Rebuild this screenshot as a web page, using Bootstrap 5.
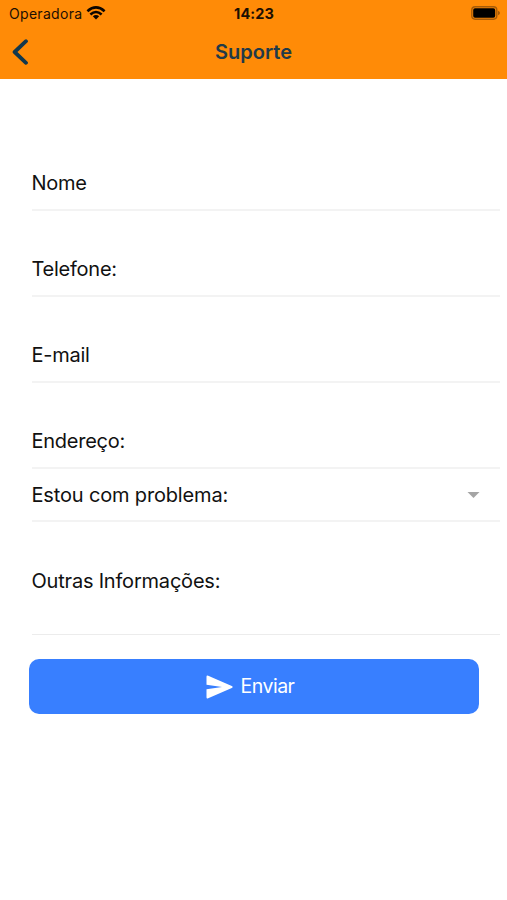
<!DOCTYPE html>
<html lang="pt-BR">
<head>
<meta charset="utf-8">
<meta name="viewport" content="width=device-width, initial-scale=1">
<title>Suporte</title>
<link href="https://cdn.jsdelivr.net/npm/bootstrap@5.3.0/dist/css/bootstrap.min.css" rel="stylesheet">
<style>
  body { font-family: Inter, "Liberation Sans", sans-serif; color: #111; overflow: hidden; }
  .app-header { background: #ff8b07; height: 79px; }
  .status-bar { height: 26px; padding: 0 7px 0 9px; color: #1c0f02; font-size: 14px; line-height: 27px; }
  .carrier { letter-spacing: .3px; }
  .clock { font-size: 14.5px; letter-spacing: .1px; margin-left: -1px; }
  .title-bar { height: 52px; padding: 0 12px; color: #213a49; }
  .title-bar h1 { font-size: 20px; line-height: 52px; letter-spacing: 0; }
  .side { flex: 1 1 0; }
  .support-form { padding: 46px 7px 0 32px; }
  .field { height: 86px; padding-top: 46px; border-bottom: 2px solid #f3f3f3; font-size: 20px; line-height: 24px; letter-spacing: -.25px; text-indent: -.5px; }
  .field-select { height: 53px; padding: 14px 20px 0 0; letter-spacing: -.16px; }
  .field-notes { height: 113px; padding-top: 47px; border-bottom-width: 1px; border-color: #ececec; letter-spacing: -.2px; }
  .send { height: 55px; margin: 24px 21px 0 -3px; padding-right: 8px; background: #387fff; border-radius: 10px; font-size: 19.5px; letter-spacing: -.5px; }
  .send span { padding-top: 1px; }
</style>
</head>
<body class="bg-white">
<header class="app-header">
  <div class="status-bar d-flex align-items-center">
    <div class="side d-flex align-items-center">
      <span class="carrier">Operadora</span>
      <svg class="ms-1" width="20" height="14" viewBox="0 0 20 14" fill="none" stroke="#0c0600" stroke-width="2.6">
        <path d="M1.4 5.2Q10-2.4 18.6 5.2M4.4 8.5Q10 3.5 15.6 8.5"/>
        <path d="M6.8 10.3Q10 7.6 13.2 10.3L10 13.6Z" fill="#0c0600" stroke="none"/>
      </svg>
    </div>
    <span class="clock fw-bold">14:23</span>
    <div class="side d-flex justify-content-end">
      <svg width="29" height="14" viewBox="0 0 29 14">
        <rect x=".8" y=".8" width="25" height="12.4" rx="3.4" fill="none" stroke="#a65b08" stroke-width="1.4"/>
        <rect x="2.2" y="2.2" width="22" height="9.6" rx="1.8" fill="#000"/>
        <path d="M27 4.8Q29 5.5 29 7T27 9.2Z" fill="#a65b08"/>
      </svg>
    </div>
  </div>
  <div class="title-bar d-flex align-items-center">
    <div class="side d-flex">
      <svg width="17" height="26" viewBox="0 0 17 26" fill="none" stroke="#12384d" stroke-width="3.8" stroke-linecap="round" stroke-linejoin="round"><path d="M14 2.2 2.6 13 14 23.8"/></svg>
    </div>
    <h1 class="m-0 fw-semibold">Suporte</h1>
    <div class="side"></div>
  </div>
</header>
<main class="support-form">
  <div class="field">Nome</div>
  <div class="field">Telefone:</div>
  <div class="field">E-mail</div>
  <div class="field">Endereço:</div>
  <div class="field field-select d-flex justify-content-between align-items-start">
    <span>Estou com problema:</span>
    <svg class="mt-2" width="13" height="8" viewBox="0 0 13 8"><path d="M.5 1H12.5L6.5 7Z" fill="#a5a5a5"/></svg>
  </div>
  <div class="field field-notes">Outras Informações:</div>
  <div class="send d-flex align-items-center justify-content-center text-white">
    <svg class="me-2" width="27" height="24" viewBox="0 0 27 24" fill="#fff"><path d="M.5 1.8Q.5 0 2.2.7L25.8 11Q27.6 12 25.8 13L2.2 23.3Q.5 24 .5 22.2V14.2L16 12 .5 9.8Z"/></svg>
    <span>Enviar</span>
  </div>
</main>
<script src="https://cdn.jsdelivr.net/npm/bootstrap@5.3.0/dist/js/bootstrap.bundle.min.js"></script>
</body>
</html>
